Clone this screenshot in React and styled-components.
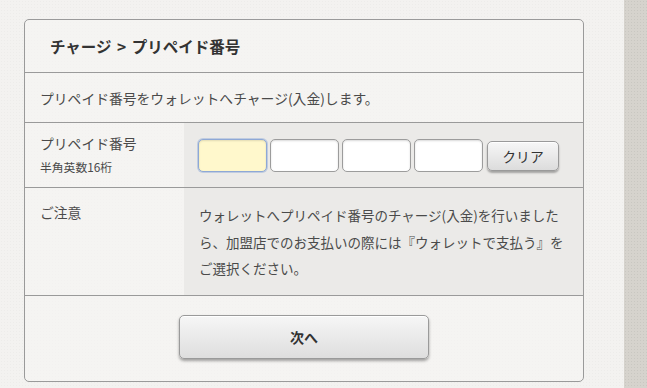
import React from 'react';
import styled, { createGlobalStyle } from 'styled-components';

const GlobalStyle = createGlobalStyle`
  html, body {
    margin: 0;
    padding: 0;
  }
  body {
    background: #f3f2f0;
    font-family: Meiryo, "Noto Sans CJK JP", "Noto Sans", sans-serif;
    color: #4a4a4a;
  }
`;

const Page = styled.div`
  display: flex;
  width: 647px;
  height: 388px;
  overflow: hidden;
  background-color: #f3f2f0;
  background-image: radial-gradient(rgba(0, 0, 0, 0.025) 1px, transparent 1px);
  background-size: 3px 3px;
`;

const Main = styled.div`
  width: 624px;
  padding: 19px 0 0 24px;
  box-sizing: border-box;
`;

const SideStrip = styled.div`
  flex: 1;
  background-color: #d6d3cd;
  background-image: radial-gradient(rgba(0, 0, 0, 0.06) 1px, transparent 1px);
  background-size: 3px 3px;
`;

const Card = styled.section`
  width: 560px;
  box-sizing: border-box;
  border: 1px solid #9a9a9a;
  border-radius: 5px;
  background: rgba(246, 245, 243, 0.6);
`;

const Header = styled.h2`
  margin: 0;
  height: 52px;
  display: flex;
  align-items: center;
  padding-left: 25px;
  font-size: 15.5px;
  font-weight: bold;
  color: #333;
  word-spacing: 2px;
`;

const Intro = styled.p`
  margin: 0;
  border-top: 1px solid #9a9a9a;
  height: 49px;
  display: flex;
  align-items: center;
  padding-left: 15px;
  font-size: 13.8px;
  color: #4a4a4a;
`;

const Row = styled.div`
  display: grid;
  grid-template-columns: 159px 1fr;
  border-top: 1px solid #9a9a9a;
  min-height: ${(p) => p.$height}px;
`;

const Label = styled.div`
  padding: ${(p) => p.$top}px 0 0 15px;
  font-size: 13.8px;
  line-height: 20px;
  color: #4a4a4a;
`;

const SubLabel = styled.div`
  margin-top: 5px;
  font-size: 11.8px;
  line-height: 18px;
  color: #4a4a4a;
`;

const Cell = styled.div`
  background: #ebeae8;
  display: flex;
  align-items: ${(p) => (p.$center ? 'center' : 'flex-start')};
  padding: ${(p) => (p.$center ? '0 0 0 14px' : '14px 16px 13px 15px')};
`;

const Inputs = styled.div`
  display: flex;
  align-items: center;
  gap: 3px;
`;

const CodeInput = styled.input`
  width: 69px;
  height: 33px;
  box-sizing: border-box;
  border: 1px solid ${(p) => (p.$focused ? '#8ea8d6' : '#9c9c9c')};
  border-radius: 5px;
  background: ${(p) => (p.$focused ? '#fff8cc' : '#fff')};
  box-shadow: ${(p) =>
    p.$focused
      ? '0 0 0 1px rgba(140, 168, 214, 0.45), inset 0 1px 2px rgba(0,0,0,0.12)'
      : 'inset 0 1px 2px rgba(0,0,0,0.15)'};
  outline: none;
  padding: 0 6px;
  font-size: 14px;
`;

const ClearButton = styled.button`
  width: 72px;
  height: 30px;
  margin-left: 1px;
  margin-top: 2px;
  border: 1px solid #9a9a9a;
  border-radius: 5px;
  background: linear-gradient(#f7f7f7, #dcdcdc);
  box-shadow: 0 2px 2px rgba(0, 0, 0, 0.3), inset 0 1px 0 #fff;
  font-family: inherit;
  font-size: 13.8px;
  color: #333;
  cursor: pointer;
`;

const Notice = styled.p`
  margin: 0;
  font-size: 13.5px;
  line-height: 26.5px;
  color: #4a4a4a;
`;

const Footer = styled.div`
  border-top: 1px solid #9a9a9a;
  display: flex;
  justify-content: center;
  padding: 19px 0 22px;
`;

const NextButton = styled.button`
  width: 250px;
  height: 44px;
  border: 1px solid #9a9a9a;
  border-radius: 5px;
  background: linear-gradient(#f6f6f6, #dedede);
  box-shadow: 0 2px 3px rgba(0, 0, 0, 0.35), inset 0 1px 0 #fff;
  font-family: inherit;
  font-size: 14px;
  font-weight: bold;
  color: #333;
  cursor: pointer;
`;

export default function App() {
  return (
    <>
      <GlobalStyle />
      <Page>
        <Main>
          <Card>
            <Header>チャージ &gt; プリペイド番号</Header>
            <Intro>プリペイド番号をウォレットへチャージ(入金)します。</Intro>
            <Row $height={64}>
              <Label $top={10}>
                プリペイド番号
                <SubLabel>半角英数16桁</SubLabel>
              </Label>
              <Cell $center>
                <Inputs>
                  <CodeInput $focused maxLength={4} />
                  <CodeInput maxLength={4} />
                  <CodeInput maxLength={4} />
                  <CodeInput maxLength={4} />
                  <ClearButton>クリア</ClearButton>
                </Inputs>
              </Cell>
            </Row>
            <Row $height={106}>
              <Label $top={14}>ご注意</Label>
              <Cell>
                <Notice>
                  ウォレットへプリペイド番号のチャージ(入金)を行いましたら、加盟店でのお支払いの際には『ウォレットで支払う』をご選択ください。
                </Notice>
              </Cell>
            </Row>
            <Footer>
              <NextButton>次へ</NextButton>
            </Footer>
          </Card>
        </Main>
        <SideStrip />
      </Page>
    </>
  );
}
